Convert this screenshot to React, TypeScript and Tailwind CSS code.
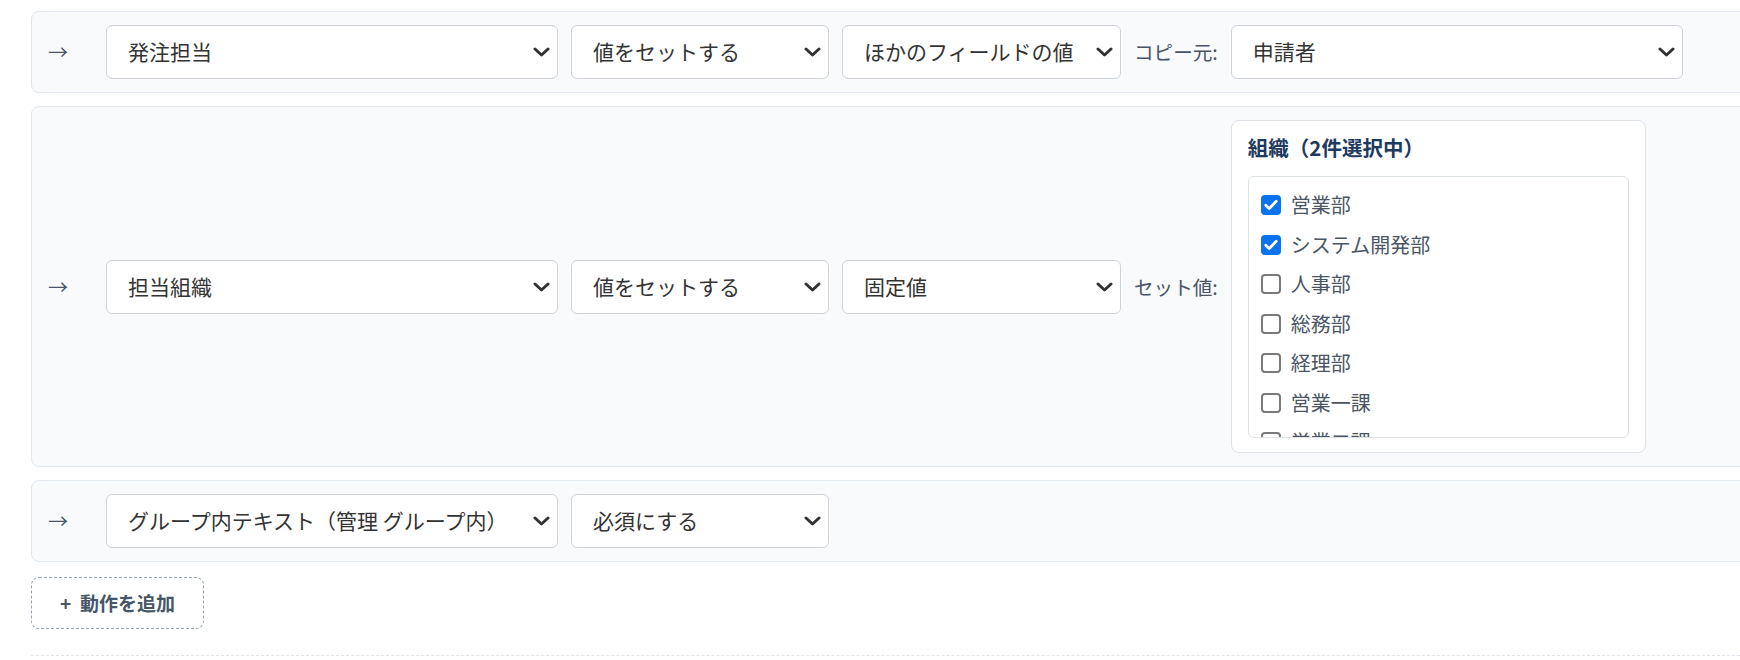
import type { ReactNode } from 'react'

const cjk = "font-['Noto_Sans_CJK_JP','Noto_Sans',sans-serif]"

// Dark chevron drawn over the native select arrow
function Chevron() {
  return (
    <svg
      className="pointer-events-none absolute right-[8px] top-1/2 -translate-y-1/2"
      width="17"
      height="10"
      viewBox="0 0 17 10"
      fill="none"
    >
      <polyline points="2,2 8.5,8 15,2" stroke="#333" strokeWidth="3" strokeLinecap="round" strokeLinejoin="round" />
    </svg>
  )
}

function Dropdown({ value, width }: { value: string; width: string }) {
  return (
    <div className={`relative shrink-0 ${width}`}>
      <select
        defaultValue={value}
        className={`h-[54px] w-full appearance-none rounded-[6px] border border-[#cfd3d8] bg-white pl-[21px] pr-[40px] text-[21px] text-[#333] outline-none ${cjk}`}
      >
        <option value={value}>{value}</option>
      </select>
      <Chevron />
    </div>
  )
}

function Label({ children }: { children: ReactNode }) {
  return <span className="shrink-0 text-[19.6px] text-[#4a5568]">{children}</span>
}

function ActionRow({ children }: { children: ReactNode }) {
  return (
    <div className="flex items-center gap-[13px] rounded-[8px] border border-[#e2e8f0] bg-[#f8fafc] py-[13px] pl-[16px]">
      <span className="w-[45px] shrink-0 text-[20px] text-[#4a5568]">→</span>
      {children}
    </div>
  )
}

function Checkbox({ checked }: { checked: boolean }) {
  if (checked) {
    return (
      <span className="flex h-[20px] w-[20px] shrink-0 items-center justify-center rounded-[4px] bg-[#0b72f0]">
        <svg width="14" height="12" viewBox="0 0 14 12" fill="none">
          <polyline points="1.8,6.2 5.2,9.6 12.2,2.2" stroke="#fff" strokeWidth="2.8" strokeLinecap="round" strokeLinejoin="round" />
        </svg>
      </span>
    )
  }
  return <span className="h-[20px] w-[20px] shrink-0 rounded-[4px] border-2 border-[#7a7a7a] bg-white" />
}

const orgs = [
  { name: '営業部', checked: true },
  { name: 'システム開発部', checked: true },
  { name: '人事部', checked: false },
  { name: '総務部', checked: false },
  { name: '経理部', checked: false },
  { name: '営業一課', checked: false },
  { name: '営業二課', checked: false },
  { name: '開発一課', checked: false },
  { name: '開発二課', checked: false },
]

function OrgPicker() {
  const count = orgs.filter(o => o.checked).length
  return (
    <div className="w-[415px] shrink-0 rounded-[8px] border border-[#dfe3e9] bg-white px-[16px] pt-[13px] pb-[14px]">
      <div className="mb-[16px] text-[20.5px] font-bold leading-[26px] text-[#1e3a5f]">組織（{count}件選択中）</div>
      <div className="h-[262px] overflow-hidden rounded-[6px] border border-[#dde2e8] bg-white pl-[12px] pt-[14px]">
        <div className="flex flex-col gap-[11.5px]">
          {orgs.map(o => (
            <label key={o.name} className="flex h-[28px] items-center gap-[10px]">
              <Checkbox checked={o.checked} />
              <span className="text-[20px] text-[#4b5563]">{o.name}</span>
            </label>
          ))}
        </div>
      </div>
    </div>
  )
}

export default function App() {
  return (
    <div className={`h-[660px] w-[1740px] overflow-hidden bg-white ${cjk}`}>
      <div className="w-[1800px] pl-[31px] pt-[11px]">
        <div className="flex flex-col gap-[13px]">
          <ActionRow>
            <Dropdown value="発注担当" width="w-[452px]" />
            <Dropdown value="値をセットする" width="w-[258px]" />
            <Dropdown value="ほかのフィールドの値" width="w-[279px]" />
            <Label>コピー元:</Label>
            <Dropdown value="申請者" width="w-[452px]" />
          </ActionRow>

          <ActionRow>
            <Dropdown value="担当組織" width="w-[452px]" />
            <Dropdown value="値をセットする" width="w-[258px]" />
            <Dropdown value="固定値" width="w-[279px]" />
            <Label>セット値:</Label>
            <OrgPicker />
          </ActionRow>

          <ActionRow>
            <Dropdown value="グループ内テキスト（管理 グループ内）" width="w-[452px]" />
            <Dropdown value="必須にする" width="w-[258px]" />
          </ActionRow>
        </div>

        <button className="mt-[15px] flex h-[52px] w-[173px] items-center justify-center gap-[9px] rounded-[8px] border border-dashed border-[#94a3b8] bg-white text-[19px] font-bold text-[#475569]">
          <span>+</span>
          <span>動作を追加</span>
        </button>

        <div className="mt-[26px] border-t border-dashed border-[#dfe3ea]" />
      </div>
    </div>
  )
}
